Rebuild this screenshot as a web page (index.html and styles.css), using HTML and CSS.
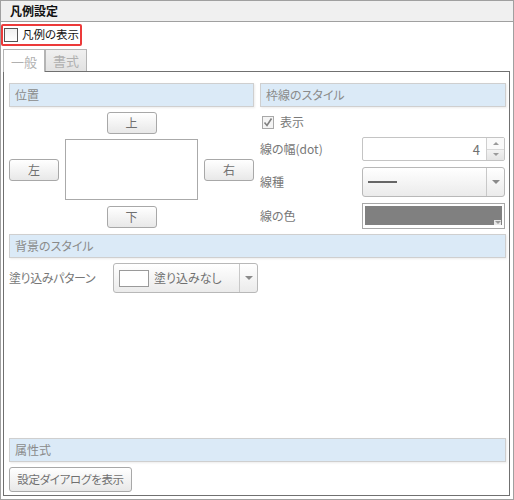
FILE: index.html
```html
<!DOCTYPE html>
<html lang="ja">
<head>
<meta charset="utf-8">
<title>凡例設定</title>
<link rel="stylesheet" href="styles.css">
</head>
<body>
<div class="frame">
  <div class="titlebar">凡例設定</div>
  <div class="legend-toggle">
    <span class="cb-main"></span>
    <span class="legend-label">凡例の表示</span>
  </div>
  <div class="tabs">
    <div class="tab active">一般</div>
    <div class="tab">書式</div>
  </div>
  <div class="panel">
    <div class="top-row">
      <div class="col-left">
        <div class="sec-head">位置</div>
        <div class="pos-grid">
          <div class="btn pos-top">上</div>
          <div class="btn pos-left">左</div>
          <div class="preview"></div>
          <div class="btn pos-right">右</div>
          <div class="btn pos-bottom">下</div>
        </div>
      </div>
      <div class="col-right">
        <div class="sec-head">枠線のスタイル</div>
        <div class="show-row">
          <svg class="cb-checked" width="12" height="13" viewBox="0 0 12 13">
            <rect x="0.5" y="0.5" width="11" height="12" fill="#f4f4f4" stroke="#a8a8a8"/>
            <path d="M2.5 6.5 L5 9.5 L9.5 2.5" fill="none" stroke="#808080" stroke-width="1.6"/>
          </svg>
          <span class="show-label">表示</span>
        </div>
        <div class="field f-width">
          <span class="lbl">線の幅(dot)</span>
          <div class="spinner">
            <span class="spin-val">4</span>
            <div class="spin-btns">
              <div class="spin-up"><span class="tri-up"></span></div>
              <div class="spin-down"><span class="tri-down small"></span></div>
            </div>
          </div>
        </div>
        <div class="field f-type">
          <span class="lbl">線種</span>
          <div class="combo line-combo">
            <div class="combo-body"><span class="line-sample"></span></div>
            <div class="combo-arrow"><span class="tri-down"></span></div>
          </div>
        </div>
        <div class="field f-color">
          <span class="lbl">線の色</span>
          <div class="color-box">
            <div class="color-fill"></div>
            <span class="color-drop"><span class="tri-down tiny"></span></span>
          </div>
        </div>
      </div>
    </div>
    <div class="sec-head bg-head">背景のスタイル</div>
    <div class="fill-row">
      <span class="fill-lbl">塗り込みパターン</span>
      <div class="combo fill-combo">
        <div class="combo-body">
          <span class="swatch"></span>
          <span class="fill-text">塗り込みなし</span>
        </div>
        <div class="combo-arrow"><span class="tri-down"></span></div>
      </div>
    </div>
    <div class="footer">
      <div class="sec-head">属性式</div>
      <div class="btn dialog-btn">設定ダイアログを表示</div>
    </div>
  </div>
</div>
</body>
</html>
```
FILE: styles.css
```css
* { box-sizing: border-box; }
html, body { margin: 0; padding: 0; background: #fff; }
body {
  font-family: "Noto Sans CJK JP", "Noto Sans", sans-serif;
  font-size: 12px;
  line-height: 1;
  font-feature-settings: "palt" 1;
  color: #333;
  white-space: nowrap;
}
.frame {
  width: 514px;
  height: 500px;
  border: 1px solid #a0a0a0;
  display: flex;
  flex-direction: column;
}
.titlebar {
  height: 21px;
  background: #f0f0f0;
  border-bottom: 1px solid #a0a0a0;
  font-weight: bold;
  color: #111;
  padding-left: 9px;
  display: flex;
  align-items: center;
  font-size: 12px;
}
.legend-toggle {
  margin-top: 2px;
  width: 81px;
  height: 22px;
  border: 2px solid #ec3a3a;
  border-radius: 2px;
  display: flex;
  align-items: center;
  padding-left: 1px;
  overflow: hidden;
}
.cb-main {
  width: 14px;
  height: 14px;
  border: 1px solid #555;
  background: linear-gradient(#f0f0f0, #fff);
  flex: none;
}
.legend-label {
  margin-left: 4px;
  color: #111;
  font-size: 11.5px;
}
.tabs {
  margin-top: 3px;
  margin-left: 2px;
  display: flex;
  align-items: flex-start;
  height: 22px;
  position: relative;
  z-index: 2;
}
.tab {
  width: 42px;
  height: 22px;
  border: 1px solid #b4b4b4;
  border-bottom: none;
  color: #b0b0b0;
  font-size: 13px;
  display: flex;
  align-items: center;
  justify-content: center;
  background: linear-gradient(#f0f0f0, #e2e2e2);
}
.tab.active {
  height: 23px;
  background: #fff;
}
.panel {
  margin-left: 2px;
  width: 507px;
  height: 425px;
  border: 1px solid #707070;
  padding: 11px 3px 3px 5px;
  display: flex;
  flex-direction: column;
}
.top-row {
  display: flex;
  gap: 6px;
  align-items: flex-start;
}
.col-left { width: 245px; display: flex; flex-direction: column; }
.col-right { width: 246px; display: flex; flex-direction: column; }
.sec-head {
  height: 24px;
  background: #dbeaf7;
  border: 1px solid #cfcfcf;
  box-shadow: 1px 1px 2px rgba(0,0,0,0.08);
  color: #8a8a8a;
  padding-left: 5px;
  display: flex;
  align-items: center;
  font-size: 12px;
}
.pos-grid {
  margin-top: 5px;
  display: grid;
  grid-template-columns: 50px 133px 50px;
  grid-template-rows: 22px 61px 22px;
  column-gap: 6px;
  row-gap: 5px;
}
.btn {
  border: 1px solid #a8a8a8;
  border-radius: 3px;
  background: linear-gradient(#ffffff, #e8e8e8);
  color: #707070;
  display: flex;
  align-items: center;
  justify-content: center;
  font-size: 12px;
  height: 22px;
}
.pos-top { grid-column: 2; grid-row: 1; width: 50px; justify-self: center; }
.pos-left { grid-column: 1; grid-row: 2; align-self: center; margin-top: 1px; }
.preview { grid-column: 2; grid-row: 2; border: 1px solid #aaa; background: #fff; }
.pos-right { grid-column: 3; grid-row: 2; align-self: center; margin-top: 1px; }
.pos-bottom { grid-column: 2; grid-row: 3; width: 50px; justify-self: center; margin-top: 1px; }

.show-row {
  margin-top: 8px;
  height: 14px;
  display: flex;
  align-items: center;
  padding-left: 2px;
}
.show-label { margin-left: 6px; color: #7a7a7a; }
.field {
  display: flex;
  align-items: center;
}
.lbl { width: 102px; color: #777; flex: none; }
.f-width { margin-top: 8px; }
.f-type { margin-top: 6px; }
.f-color { margin-top: 6px; }
.spinner {
  width: 143px;
  height: 24px;
  border: 1px solid #c4c4c4;
  border-radius: 2px;
  display: flex;
  background: #fff;
}
.spin-val {
  flex: 1;
  text-align: right;
  padding-right: 6px;
  align-self: center;
  color: #707070;
  font-size: 13px;
}
.spin-btns {
  width: 18px;
  border-left: 1px solid #cfcfcf;
  display: flex;
  flex-direction: column;
}
.spin-up, .spin-down {
  flex: 1;
  display: flex;
  align-items: center;
  justify-content: center;
}
.spin-up { background: #fafafa; border-bottom: 1px solid #d8d8d8; }
.spin-down { background: linear-gradient(#f2f2f2, #e4e4e4); }
.tri-up {
  width: 0; height: 0;
  border-left: 3px solid transparent;
  border-right: 3px solid transparent;
  border-bottom: 3px solid #9a9a9a;
}
.tri-down {
  width: 0; height: 0;
  border-left: 4px solid transparent;
  border-right: 4px solid transparent;
  border-top: 4px solid #8a8a8a;
}
.tri-down.small,
.tri-down.tiny {
  border-left-width: 3px;
  border-right-width: 3px;
  border-top-width: 3px;
  border-top-color: #9a9a9a;
}
.combo {
  display: flex;
  border: 1px solid #b8b8b8;
  border-radius: 3px;
  background: linear-gradient(#ffffff, #ebebeb);
  height: 30px;
}
.line-combo { width: 143px; }
.combo-body {
  flex: 1;
  display: flex;
  align-items: center;
}
.combo-arrow {
  width: 18px;
  border-left: 1px solid #c8c8c8;
  display: flex;
  align-items: center;
  justify-content: center;
}
.line-sample {
  margin-left: 5px;
  width: 29px;
  height: 2px;
  background: #666;
}
.color-box {
  width: 143px;
  height: 26px;
  border: 1px solid #a8a8a8;
  padding: 2px 2px 3px 2px;
  background: #fff;
  position: relative;
}
.color-fill {
  width: 100%;
  height: 100%;
  background: #808080;
}
.color-drop {
  position: absolute;
  right: 3px;
  bottom: 3px;
  width: 7px;
  height: 5px;
  background: #e8e8e8;
  display: flex;
  align-items: center;
  justify-content: center;
}
.bg-head { margin-top: 5px; width: 497px; }
.fill-row {
  margin-top: 5px;
  display: flex;
  align-items: center;
}
.fill-lbl { width: 104px; color: #777; flex: none; letter-spacing: -0.4px; }
.fill-combo { width: 145px; }
.swatch {
  margin-left: 5px;
  width: 30px;
  height: 17px;
  border: 1px solid #9a9a9a;
  background: #fff;
}
.fill-text { margin-left: 5px; color: #707070; }
.footer {
  margin-top: auto;
  display: flex;
  flex-direction: column;
}
.footer .sec-head { width: 497px; }
.dialog-btn {
  margin-top: 5px;
  width: 123px;
  height: 25px;
  font-size: 11.5px;
  letter-spacing: -0.3px;
}
```
